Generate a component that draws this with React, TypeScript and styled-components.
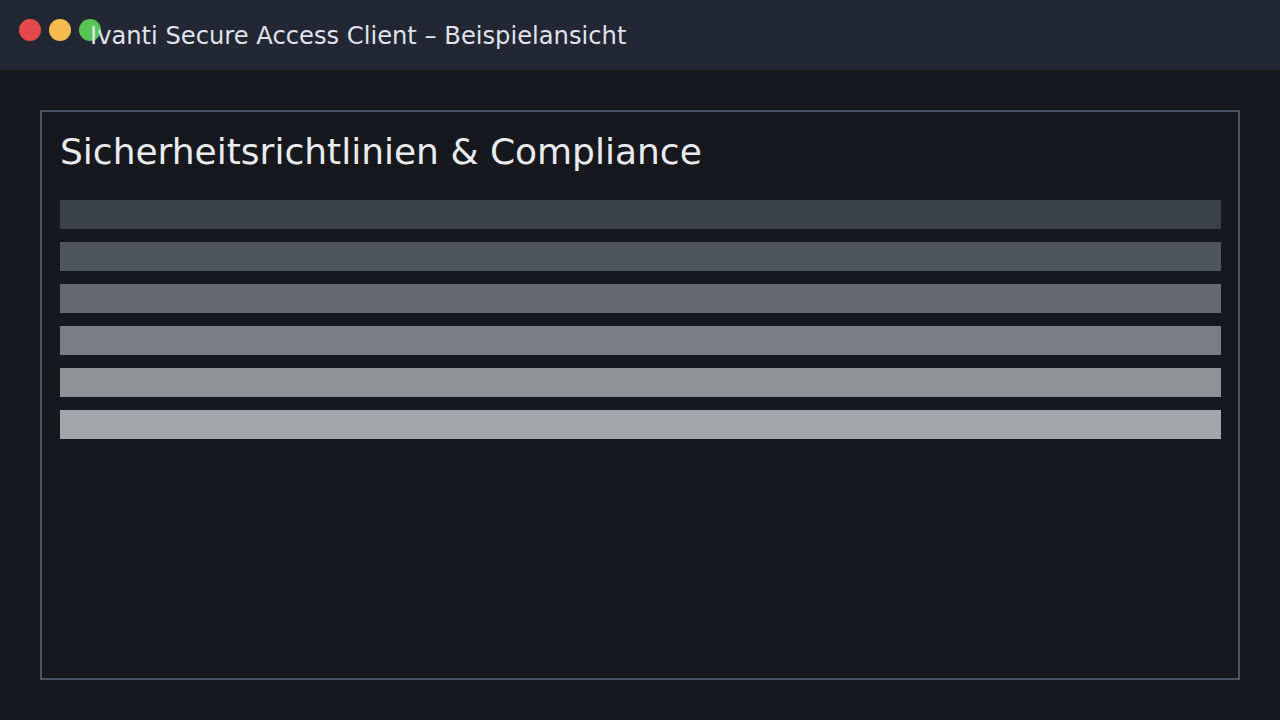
import styled, { createGlobalStyle } from 'styled-components'

const GlobalStyle = createGlobalStyle`
  html, body {
    margin: 0;
    padding: 0;
    background: #16181d;
    font-family: "DejaVu Sans", "Noto Sans", sans-serif;
  }
`

const Window = styled.div`
  display: flex;
  flex-direction: column;
  width: 1280px;
  height: 720px;
  background: #16181d;
`

const TitleBar = styled.header`
  position: relative;
  display: flex;
  align-items: center;
  flex: 0 0 70px;
  padding-left: 90px;
  background: #232733;
`

const Lights = styled.div`
  position: absolute;
  left: 19px;
  top: 19px;
  display: flex;
  gap: 8px;
`

const Light = styled.span<{ $color: string }>`
  width: 22px;
  height: 22px;
  border-radius: 50%;
  background: ${p => p.$color};
`

const Title = styled.h1`
  position: relative;
  margin: 0;
  padding-top: 2px;
  font-size: 24.2px;
  line-height: 28px;
  font-weight: 400;
  color: #dfe3ea;
`

const Content = styled.main`
  flex: 1;
  padding: 40px;
`

const Panel = styled.section`
  display: flex;
  flex-direction: column;
  height: 570px;
  box-sizing: border-box;
  border: 2px solid #4a5161;
  padding: 18px;
`

const Heading = styled.h2`
  margin: 0 0 27px;
  font-size: 36px;
  line-height: 43px;
  font-weight: 400;
  color: #e8ebef;
`

const Bars = styled.div`
  display: flex;
  flex-direction: column;
  gap: 13px;
`

const Bar = styled.div<{ $shade: string }>`
  width: 1161px;
  height: 29px;
  background: ${p => p.$shade};
`

const shades = ['#3b4045', '#50555a', '#65696e', '#7a7e82', '#8e9295', '#a3a6a9']

export default function App() {
  return (
    <>
      <GlobalStyle />
      <Window>
        <TitleBar>
          <Lights>
            <Light $color="#e5484d" />
            <Light $color="#f5bd4f" />
            <Light $color="#57c453" />
          </Lights>
          <Title>Ivanti Secure Access Client – Beispielansicht</Title>
        </TitleBar>
        <Content>
          <Panel>
            <Heading>Sicherheitsrichtlinien &amp; Compliance</Heading>
            <Bars>
              {shades.map(s => (
                <Bar key={s} $shade={s} />
              ))}
            </Bars>
          </Panel>
        </Content>
      </Window>
    </>
  )
}
